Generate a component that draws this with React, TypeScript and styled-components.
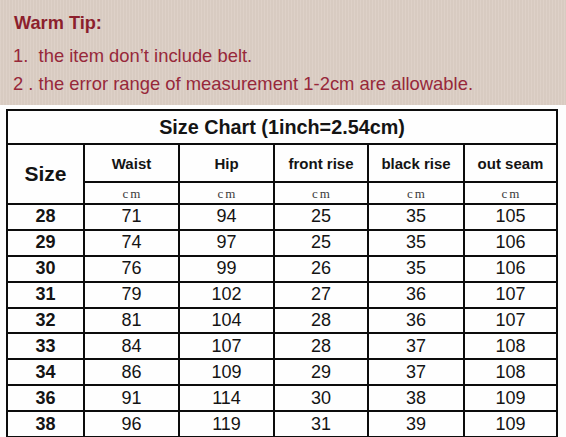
import React, { FC } from 'react';
import styled, { createGlobalStyle } from 'styled-components';

const GlobalStyle = createGlobalStyle`
  html, body {
    margin: 0;
    padding: 0;
    background: #fdfdfd;
  }
  body {
    font-family: 'Liberation Sans', Arial, sans-serif;
  }
`;

const Page = styled.div`
  width: 566px;
  height: 437px;
  overflow: hidden;
  background: #fdfdfd;
`;

const TipBox = styled.section`
  height: 105px;
  box-sizing: border-box;
  padding: 9px 0 0 13px;
  background: #dccfc5;
  background-image: repeating-linear-gradient(
    90deg,
    rgba(255, 255, 255, 0.05) 0px,
    rgba(255, 255, 255, 0.05) 1px,
    rgba(0, 0, 0, 0.02) 1px,
    rgba(0, 0, 0, 0.02) 3px
  );
`;

const TipTitle = styled.h2`
  margin: 0 0 5px 1px;
  font-size: 18.2px;
  line-height: 28px;
  font-weight: 700;
  color: #8c1f2d;
`;

const TipLine = styled.p`
  margin: 0;
  font-size: 18.4px;
  line-height: 28px;
  color: #97283a;
  white-space: pre;
`;

const TableArea = styled.div`
  padding: 4px 0 0 6px;
`;

const Grid = styled.div`
  display: grid;
  width: 552px;
  box-sizing: border-box;
  grid-template-columns: 75px 93px 93px 92px 94px 91px;
  grid-template-rows: 32px 36px 20px repeat(9, 23.9px);
  gap: 2px;
  padding: 2px;
  background: #0c0c0c;
`;

const Cell = styled.div<{ $span?: number; $rows?: number; $bold?: boolean; $size?: number }>`
  background: #fefefe;
  display: flex;
  align-items: center;
  justify-content: center;
  grid-column: ${({ $span }) => ($span ? `span ${$span}` : 'auto')};
  grid-row: ${({ $rows }) => ($rows ? `span ${$rows}` : 'auto')};
  font-size: ${({ $size }) => $size ?? 18}px;
  font-weight: ${({ $bold }) => ($bold ? 700 : 400)};
  color: #141414;
  white-space: nowrap;
`;

const UnitCell = styled(Cell)`
  font-family: 'Liberation Serif', 'DejaVu Serif', serif;
  font-size: 13px;
  letter-spacing: 2px;
  color: #3a3a3a;
  padding: 2px 0 0 2px;
  box-sizing: border-box;
`;

const headers = ['Waist', 'Hip', 'front rise', 'black rise', 'out seam'];

const rows: number[][] = [
  [28, 71, 94, 25, 35, 105],
  [29, 74, 97, 25, 35, 106],
  [30, 76, 99, 26, 35, 106],
  [31, 79, 102, 27, 36, 107],
  [32, 81, 104, 28, 36, 107],
  [33, 84, 107, 28, 37, 108],
  [34, 86, 109, 29, 37, 108],
  [36, 91, 114, 30, 38, 109],
  [38, 96, 119, 31, 39, 109],
];

const App: FC = () => (
  <Page>
    <GlobalStyle />
    <TipBox>
      <TipTitle>Warm Tip:</TipTitle>
      <TipLine>{'1.  the item don’t include belt.'}</TipLine>
      <TipLine>2 . the error range of measurement 1-2cm are allowable.</TipLine>
    </TipBox>
    <TableArea>
      <Grid>
        <Cell $span={6} $bold $size={19.8}>Size Chart (1inch=2.54cm)</Cell>
        <Cell $rows={2} $bold $size={21}>Size</Cell>
        {headers.map((h) => (
          <Cell key={h} $bold $size={15}>{h}</Cell>
        ))}
        {headers.map((h) => (
          <UnitCell key={`u-${h}`}>cm</UnitCell>
        ))}
        {rows.map((r) =>
          r.map((v, i) => (
            <Cell key={`${r[0]}-${i}`} $bold={i === 0}>{v}</Cell>
          )),
        )}
      </Grid>
    </TableArea>
  </Page>
);

export default App;
